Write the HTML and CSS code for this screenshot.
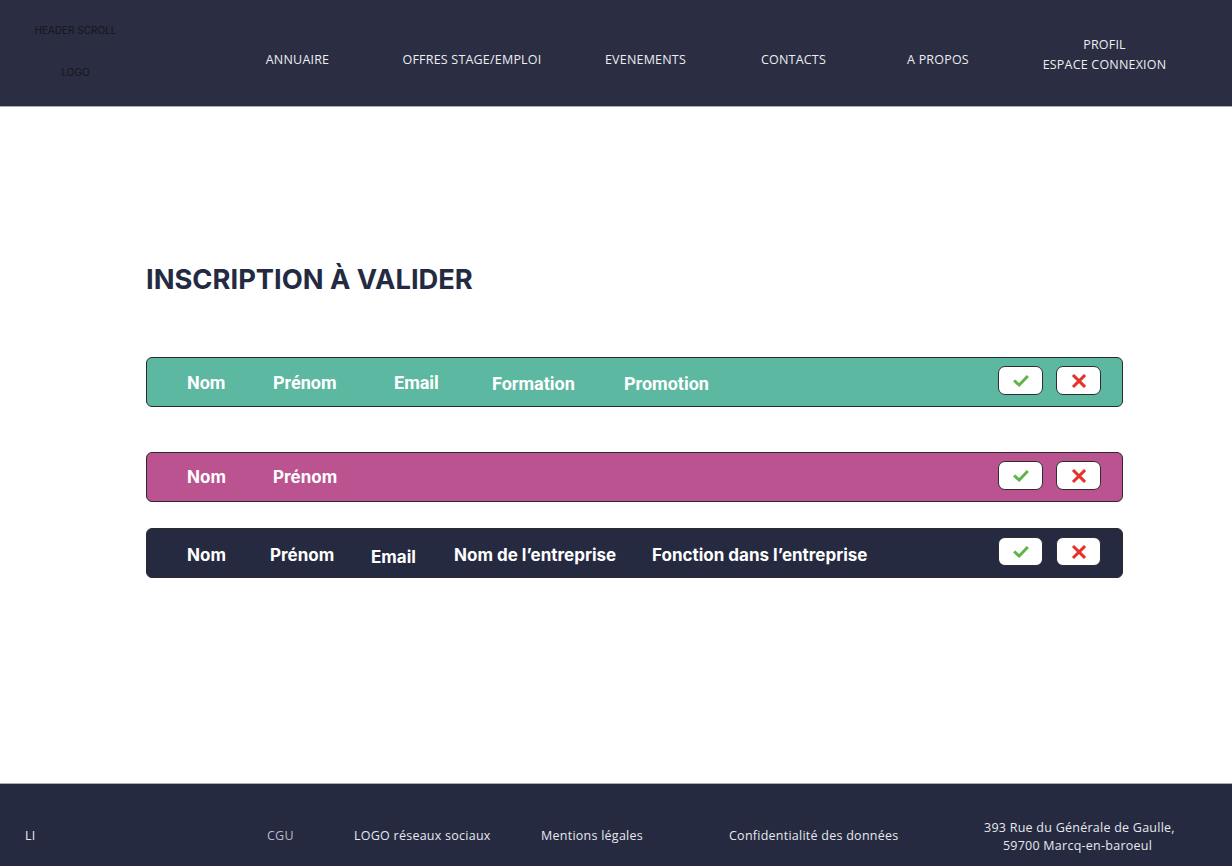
FILE: index.html
```html
<!DOCTYPE html>
<html lang="fr">
<head>
<meta charset="utf-8">
<title>Inscription à valider</title>
<link rel="stylesheet" href="styles.css">
</head>
<body>
<header class="header">
  <div class="brand">
    <span class="brand-top">HEADER SCROLL</span>
    <span class="brand-logo">LOGO</span>
  </div>
  <nav class="nav">
    <a class="nav-item n1">ANNUAIRE</a>
    <a class="nav-item n2">OFFRES STAGE/EMPLOI</a>
    <a class="nav-item n3">EVENEMENTS</a>
    <a class="nav-item n4">CONTACTS</a>
    <a class="nav-item n5">A PROPOS</a>
    <a class="nav-item n6 nav-double"><span>PROFIL</span><span>ESPACE CONNEXION</span></a>
  </nav>
</header>

<main class="main">
  <h1 class="title">INSCRIPTION À VALIDER</h1>

  <div class="row row-green">
    <div class="cells cells-student">
      <span>Nom</span><span>Prénom</span><span>Email</span><span class="low1">Formation</span><span class="low1">Promotion</span>
    </div>
    <div class="actions">
      <button class="btn"><svg viewBox="0 0 20 20" width="18" height="18"><path d="M3.5 10.5 L8 14.5 L16.5 5.5" fill="none" stroke="#5cb545" stroke-width="3.2" stroke-linecap="square"/></svg></button>
      <button class="btn"><svg viewBox="0 0 20 20" width="18" height="18"><path d="M4.5 4.5 L15.5 15.5 M15.5 4.5 L4.5 15.5" fill="none" stroke="#e5322a" stroke-width="3.4" stroke-linecap="square"/></svg></button>
    </div>
  </div>

  <div class="row row-pink">
    <div class="cells cells-inter">
      <span>Nom</span><span>Prénom</span>
    </div>
    <div class="actions">
      <button class="btn"><svg viewBox="0 0 20 20" width="18" height="18"><path d="M3.5 10.5 L8 14.5 L16.5 5.5" fill="none" stroke="#5cb545" stroke-width="3.2" stroke-linecap="square"/></svg></button>
      <button class="btn"><svg viewBox="0 0 20 20" width="18" height="18"><path d="M4.5 4.5 L15.5 15.5 M15.5 4.5 L4.5 15.5" fill="none" stroke="#e5322a" stroke-width="3.4" stroke-linecap="square"/></svg></button>
    </div>
  </div>

  <div class="row row-dark">
    <div class="cells cells-inter cells-company">
      <span>Nom</span><span>Prénom</span><span class="low2">Email</span><span>Nom de l’entreprise</span><span>Fonction dans l’entreprise</span>
    </div>
    <div class="actions">
      <button class="btn"><svg viewBox="0 0 20 20" width="18" height="18"><path d="M3.5 10.5 L8 14.5 L16.5 5.5" fill="none" stroke="#5cb545" stroke-width="3.2" stroke-linecap="square"/></svg></button>
      <button class="btn"><svg viewBox="0 0 20 20" width="18" height="18"><path d="M4.5 4.5 L15.5 15.5 M15.5 4.5 L4.5 15.5" fill="none" stroke="#e5322a" stroke-width="3.4" stroke-linecap="square"/></svg></button>
    </div>
  </div>
</main>

<footer class="footer">
  <span class="f-item f1">LI</span>
  <span class="f-item f2">CGU</span>
  <span class="f-item f3">LOGO réseaux sociaux</span>
  <span class="f-item f4">Mentions légales</span>
  <span class="f-item f5">Confidentialité des données</span>
  <span class="f-item f6">393 Rue du Générale de Gaulle,<br>59700 Marcq-en-baroeul</span>
</footer>
</body>
</html>
```

FILE: styles.css
```css
* { box-sizing: border-box; }

html, body {
  margin: 0;
  padding: 0;
}

body {
  width: 1232px;
  height: 866px;
  display: flex;
  flex-direction: column;
  background: #ffffff;
  font-family: "Open Sans", "Liberation Sans", sans-serif;
  overflow: hidden;
}

/* Header */
.header {
  height: 107px;
  flex: none;
  background: #2b2d42;
  border-bottom: 1px solid #a9aab2;
  display: flex;
  align-items: flex-start;
}

.brand {
  width: 151px;
  padding-top: 24px;
  display: flex;
  flex-direction: column;
  align-items: center;
  gap: 30px;
  font-family: "Inter", sans-serif;
  font-size: 10px;
  line-height: 12px;
  color: #15161c;
}

.nav {
  display: flex;
  margin-left: 59px;
  padding-top: 50px;
  font-family: "Open Sans", sans-serif;
  font-size: 12.5px;
  letter-spacing: 0.2px;
  line-height: 20px;
  color: #eceef2;
}

.nav-item {
  display: flex;
  flex-direction: column;
  align-items: center;
  text-align: center;
  white-space: nowrap;
}

.nav-double { margin-top: -15px; }

.n1 { width: 175px; }
.n2 { width: 174px; }
.n3 { width: 173px; }
.n4 { width: 123px; }
.n5 { width: 166px; }
.n6 { width: 167px; }

/* Main */
.main {
  flex: 1;
  padding: 157px 109px 0 146px;
  display: flex;
  flex-direction: column;
}

.title {
  margin: 0 0 61px;
  font-family: "Inter", sans-serif;
  font-weight: 700;
  font-size: 27.3px;
  line-height: 32px;
  color: #232a42;
}

.row {
  height: 50px;
  border: 1px solid #2a2a2e;
  border-radius: 6px;
  display: flex;
  align-items: center;
  justify-content: space-between;
  padding: 0 21px 0 40px;
  color: #ffffff;
}

.row-green { background: #5cb8a1; margin-bottom: 45px; }
.row-pink { background: #bb5390; margin-bottom: 26px; }
.row-dark { background: #252a41; }

.cells {
  display: grid;
  font-weight: 700;
  white-space: nowrap;
}

.cells-student {
  font-family: "Roboto", sans-serif;
  font-size: 18px;
  grid-template-columns: 86px 121px 98px 132px auto;
}

.cells-inter {
  font-family: "Inter", sans-serif;
  font-size: 17px;
  grid-template-columns: 86px auto;
}

.cells-company {
  grid-template-columns: 83px 101px 83px 198px auto;
  padding-top: 4px;
}

.low1 { position: relative; top: 1px; }
.low2 { position: relative; top: 2px; }

.actions {
  display: flex;
  gap: 13px;
  margin-bottom: 3px;
}

.btn {
  width: 45px;
  height: 29px;
  padding: 0;
  border: 1px solid #2d2d33;
  border-radius: 7px;
  background: #ffffff;
  display: flex;
  align-items: center;
  justify-content: center;
}

/* Footer */
.footer {
  height: 83px;
  flex: none;
  background: #252a40;
  border-top: 1px solid #a9aab2;
  display: flex;
  align-items: center;
  padding-top: 20px;
  font-family: "Open Sans", sans-serif;
  font-size: 12.5px;
  letter-spacing: 0.25px;
  color: #e6e8ee;
}

.f-item { white-space: nowrap; flex: none; }
.f1 { margin-left: 25px; width: 242px; }
.f2 { width: 87px; color: #b9bcc6; }
.f3 { width: 187px; }
.f4 { width: 188px; }
.f5 { width: 255px; }
.f6 { width: 187px; text-align: center; line-height: 18px; margin-top: 4px; }
```
